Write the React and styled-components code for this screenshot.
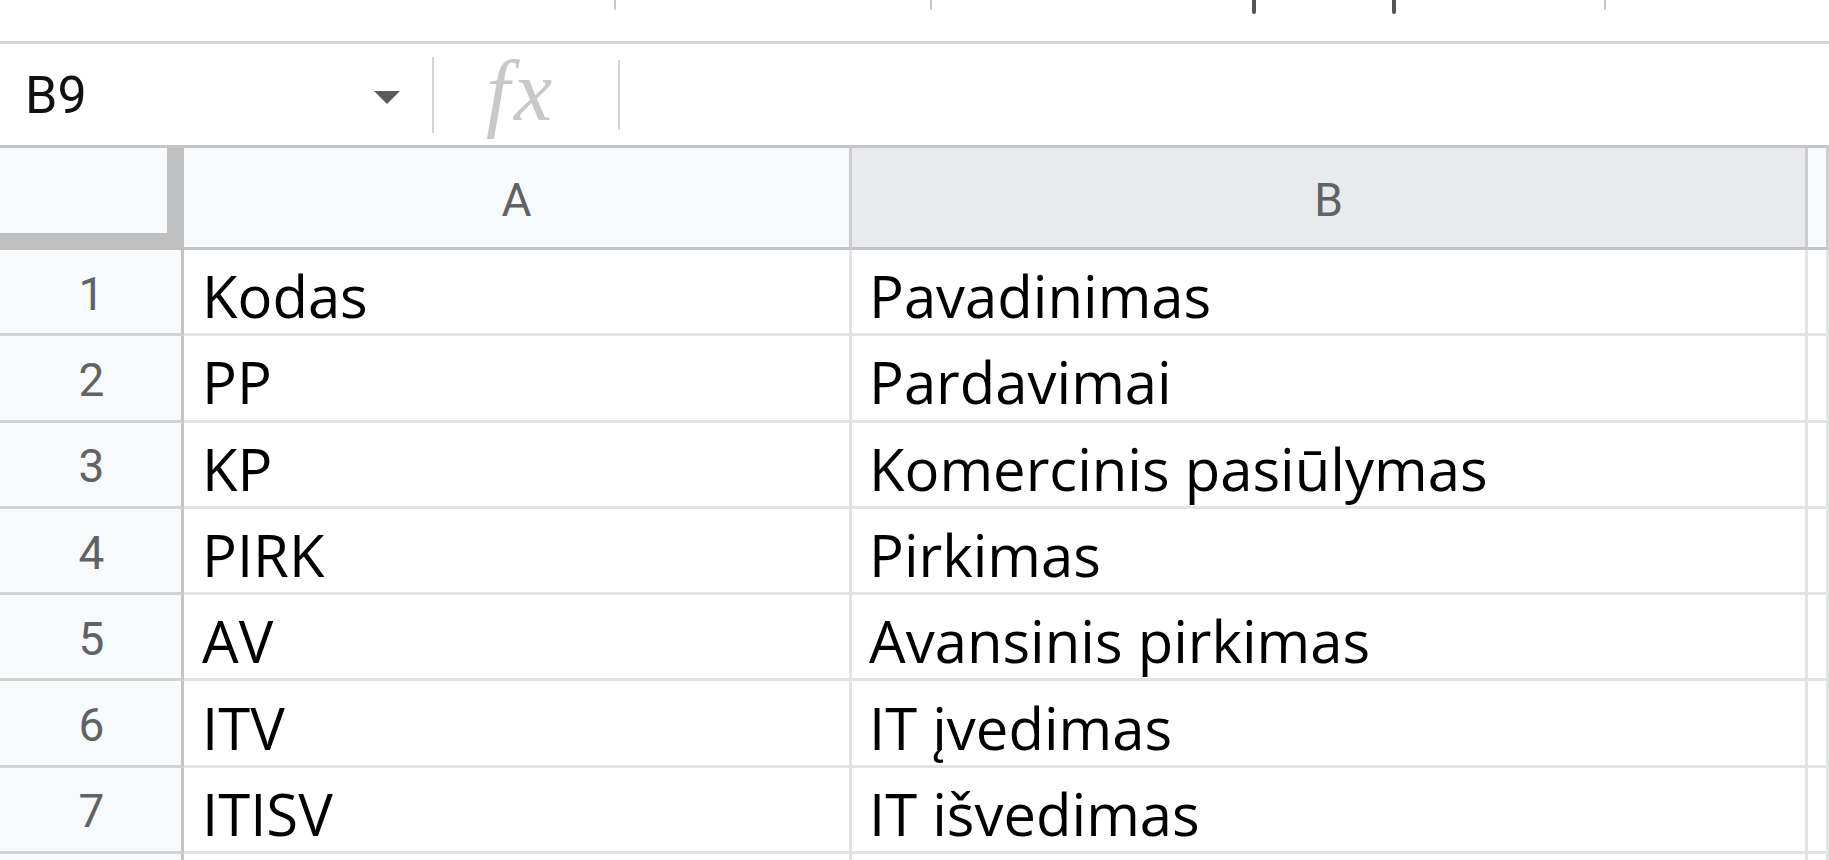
import React from 'react'
import styled, { createGlobalStyle } from 'styled-components'

const GlobalStyle = createGlobalStyle`
  * { box-sizing: border-box; }
  html, body { margin: 0; padding: 0; background: #fff; }
  body { font-family: Roboto, 'Liberation Sans', sans-serif; overflow: hidden; }
`

/* Layout */
const Page = styled.div`
  display: flex;
  flex-direction: column;
  width: 100vw;
  height: 100vh;
  overflow: hidden;
  background: #fff;
`

const Toolbar = styled.div`
  height: 44px;
  flex: none;
  display: flex;
  align-items: flex-start;
  border-bottom: 3px solid #d6d6d6;
`

const ToolTip = styled.span`
  flex: none;
  width: ${(p) => (p.$dark ? 4 : 2)}px;
  height: ${(p) => (p.$dark ? 14 : 10)}px;
  margin-left: ${(p) => p.$gap}px;
  background: ${(p) => (p.$dark ? '#555' : '#c8c8c8')};
  border-radius: 0 0 2px 2px;
`

const FormulaBar = styled.div`
  height: 104px;
  flex: none;
  display: flex;
  align-items: center;
  border-bottom: 3px solid #c6c6c6;
`

const NameBox = styled.div`
  width: 432px;
  height: 100%;
  display: flex;
  align-items: center;
  padding-left: 25px;
  padding-right: 32px;
`

const NameText = styled.span`
  flex: 1;
  font-family: Roboto, 'Liberation Sans', sans-serif;
  font-size: 52px;
  color: #111;
  line-height: 1;
  padding-top: 2px;
`

const Caret = styled.span`
  width: 0;
  height: 0;
  border-left: 13px solid transparent;
  border-right: 13px solid transparent;
  border-top: 13px solid #5a5a5a;
  margin-top: 6px;
`

const Divider = styled.span`
  width: 2px;
  height: ${(p) => p.$h}px;
  background: #d4d4d4;
  flex: none;
`

const FxLabel = styled.span`
  width: 184px;
  padding-left: 52px;
  font-family: 'Liberation Serif', serif;
  font-style: italic;
  font-size: 86px;
  line-height: 1;
  letter-spacing: 4px;
  color: #c8c8c8;
  margin-top: -8px;
`

const Grid = styled.div`
  display: grid;
  grid-template-columns: 184px 668px 956px 1fr;
  grid-template-rows: 102px;
  grid-auto-rows: 86.3px;
  flex: 1;
  min-height: 0;
`

const Corner = styled.div`
  background: #f8f9fa;
  border-right: 17px solid #c0c0c0;
  border-bottom: 17px solid #c0c0c0;
`

const ColHead = styled.div`
  display: flex;
  align-items: center;
  justify-content: center;
  padding-top: 4px;
  background: ${(p) => (p.$active ? '#e8eaed' : '#f8f9fa')};
  border-right: 3px solid #cdcdcd;
  border-bottom: 3px solid #c4c4c4;
  font-family: Roboto, 'Liberation Sans', sans-serif;
  font-size: 46px;
  color: #5f6368;
`

const RowHead = styled.div`
  display: flex;
  align-items: center;
  justify-content: center;
  padding-top: 4px;
  padding-left: 2px;
  background: #f8f9fa;
  border-right: 3px solid #c4c4c4;
  border-bottom: 3px solid #d2d2d2;
  font-family: Roboto, 'Liberation Sans', sans-serif;
  font-size: 46px;
  color: #5f6368;
`

const Cell = styled.div`
  display: flex;
  align-items: center;
  padding-left: ${(p) => p.$pad || 18}px;
  padding-top: 8px;
  border-right: 3px solid #e2e3e3;
  border-bottom: 3px solid #e2e3e3;
  font-family: 'Open Sans', 'Noto Sans', sans-serif;
  font-size: 58px;
  color: #000;
  white-space: nowrap;
  overflow: hidden;
`

const rows = [
  ['Kodas', 'Pavadinimas'],
  ['PP', 'Pardavimai'],
  ['KP', 'Komercinis pasiūlymas'],
  ['PIRK', 'Pirkimas'],
  ['AV', 'Avansinis pirkimas'],
  ['ITV', 'IT įvedimas'],
  ['ITISV', 'IT išvedimas'],
]

const tips = [
  { gap: 614 },
  { gap: 314 },
  { gap: 320, dark: true },
  { gap: 136, dark: true },
  { gap: 208 },
]

const App = () => (
  <Page>
    <GlobalStyle />
    <Toolbar>
      {tips.map((t, i) => (
        <ToolTip key={i} $gap={t.gap} $dark={t.dark} />
      ))}
    </Toolbar>
    <FormulaBar>
      <NameBox>
        <NameText>B9</NameText>
        <Caret />
      </NameBox>
      <Divider $h={76} />
      <FxLabel>fx</FxLabel>
      <Divider $h={70} />
    </FormulaBar>
    <Grid>
      <Corner />
      <ColHead>A</ColHead>
      <ColHead $active>B</ColHead>
      <ColHead />
      {rows.map((r, i) => (
        <React.Fragment key={i}>
          <RowHead>{i + 1}</RowHead>
          <Cell>{r[0]}</Cell>
          <Cell $pad={17}>{r[1]}</Cell>
          <Cell />
        </React.Fragment>
      ))}
      {/* next row, only its top edge shows */}
      <RowHead />
      <Cell />
      <Cell />
      <Cell />
    </Grid>
  </Page>
)

export default App
